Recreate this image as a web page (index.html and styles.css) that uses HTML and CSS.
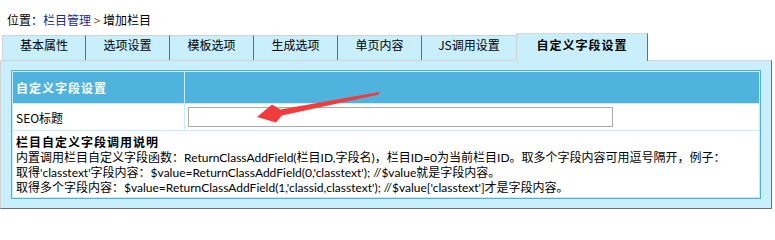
FILE: index.html
```html
<!DOCTYPE html>
<html lang="zh-CN">
<head>
<meta charset="utf-8">
<title>增加栏目</title>
<link rel="stylesheet" href="styles.css">
</head>
<body>
<div class="crumb">位置：<a class="crumb-link" href="#">栏目管理</a> <span class="crumb-sep">&gt;</span> 增加栏目</div>
<div class="tabs">
  <div class="tab tab-first">基本属性</div>
  <div class="tab">选项设置</div>
  <div class="tab">模板选项</div>
  <div class="tab">生成选项</div>
  <div class="tab">单页内容</div>
  <div class="tab tab-wide">JS调用设置</div>
  <div class="tab tab-active">自定义字段设置</div>
</div>
<div class="panel">
  <table class="grid">
    <tr class="head-row">
      <td class="c1 head">自定义字段设置</td>
      <td class="c2 head"></td>
    </tr>
    <tr class="seo-row">
      <td class="c1 cell">SEO标题</td>
      <td class="c2 cell"><input class="field" type="text"></td>
    </tr>
    <tr>
      <td class="cell notes" colspan="2">
        <div class="notes-title">栏目自定义字段调用说明</div>
        <div>内置调用栏目自定义字段函数：ReturnClassAddField(栏目ID,字段名)，栏目ID=0为当前栏目ID。取多个字段内容可用逗号隔开，例子：</div>
        <div>取得'classtext'字段内容：$value=ReturnClassAddField(0,'classtext'); //$value就是字段内容。</div>
        <div>取得多个字段内容：$value=ReturnClassAddField(1,'classid,classtext'); //$value['classtext']才是字段内容。</div>
      </td>
    </tr>
  </table>
</div>
<svg class="arrow" width="775" height="210" viewBox="0 0 775 210">
  <polygon points="257,117 272,104.5 280.5,109.5 379,92 379,94.5 282,115.5 276,122.5" fill="#F23B3B"/>
</svg>
</body>
</html>
```

FILE: styles.css
```css
html, body {
  margin: 0;
  padding: 0;
  background: #ffffff;
}
body {
  font-family: "Noto Sans CJK SC", "Noto Sans", sans-serif;
  font-size: 12px;
  color: #000;
  width: 775px;
  height: 210px;
  overflow: hidden;
  position: relative;
}
.crumb {
  box-sizing: border-box;
  height: 33px;
  padding: 12px 0 0 7px;
  line-height: 16px;
  white-space: nowrap;
}
.crumb-link {
  color: #1b2a8c;
  text-decoration: none;
}
.crumb-sep {
  color: #8a6418;
}
.tabs {
  display: flex;
  align-items: flex-end;
  height: 27px;
  padding-left: 2px;
}
.tab {
  box-sizing: border-box;
  width: 84px;
  height: 25px;
  padding-top: 1px;
  line-height: 16px;
  text-align: center;
  background: #c9effc;
  border-top: 1px solid #d2d2d2;
  border-right: 1px solid #6e6e6e;
  white-space: nowrap;
}
.tab-first {
  border-left: 1px solid #d2d2d2;
}
.tab-wide {
  width: 94px;
  border-right: none;
}
.tab-active {
  position: relative;
  z-index: 1;
  width: 132px;
  height: 28px;
  margin-bottom: -1px;
  padding-top: 3px;
  font-weight: bold;
  letter-spacing: 1px;
  border-left: 1px solid #d2d2d2;
  border-top: 1px solid #d8d8d8;
}
.panel {
  box-sizing: border-box;
  width: 772px;
  padding: 9px 10px;
  background: #c9effc;
  border-top: 1px solid #d2d2d2;
  border-left: 1px solid #d2d2d2;
  border-right: 1px solid #6e6e6e;
  border-bottom: 1px solid #6e6e6e;
}
.grid {
  width: 750px;
  border: 1px solid #4bb0da;
  border-collapse: separate;
  border-spacing: 1px;
  background: #c8ecfa;
}
.grid td {
  padding: 0;
}
.c1 {
  width: 168px;
}
.head {
  height: 31px;
  background: #4fb3dd;
  color: #ffffff;
  font-weight: bold;
  letter-spacing: 1px;
  padding-left: 3px !important;
  vertical-align: middle;
  white-space: nowrap;
}
.cell {
  background: #ffffff;
  padding-left: 3px !important;
}
.seo-row .cell {
  height: 26px;
  vertical-align: middle;
}
.field {
  display: block;
  box-sizing: border-box;
  width: 425px;
  height: 20px;
  margin: 0;
  border: 1px solid #ababab;
  background: #fff;
}
.notes {
  height: 66px;
  box-sizing: border-box;
  padding: 4px 3px 2px 3px !important;
  font-family: Lato, "Noto Sans CJK SC", sans-serif;
  line-height: 15px;
  vertical-align: top;
  white-space: nowrap;
}
.notes-title {
  font-weight: bold;
  letter-spacing: 1px;
}
.arrow {
  position: absolute;
  left: 0;
  top: 0;
  pointer-events: none;
}
```
